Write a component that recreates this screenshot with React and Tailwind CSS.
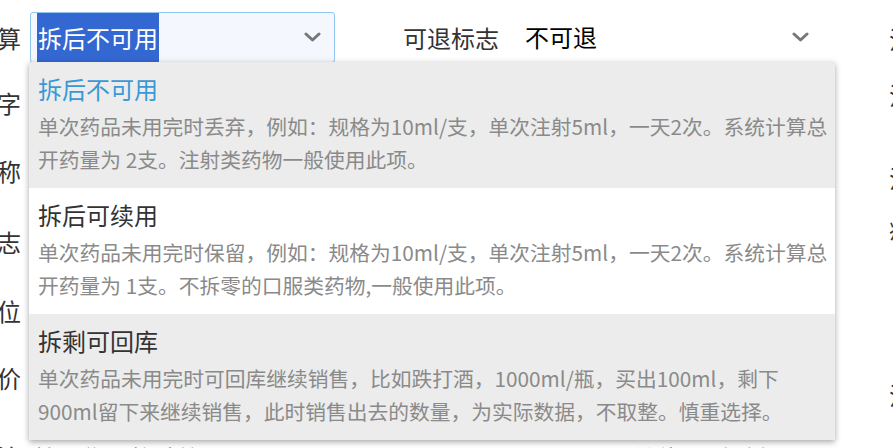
import React from 'react'

const leftLabels = [
  { text: '是否拆零计算', top: 'mt-[14px]' },
  { text: '助记名字', top: 'mt-[17px]' },
  { text: '药品名称', top: 'mt-[20px]' },
  { text: '是否禁用标志', top: 'mt-[23px]' },
  { text: '最小单位', top: 'mt-[21px]' },
  { text: '零售单价', top: 'mt-[19px]' }
]

const rightLabels = [
  { text: '注射方式', top: 'mt-[15px]' },
  { text: '注意事项', top: 'mt-[8px]' },
  { text: '注册商标', top: 'mt-[35px]' },
  { text: '病种分类', top: 'mt-[2px]' },
  { text: '注释说明', top: 'mt-[119px]' }
]

const options = [
  {
    title: '拆后不可用',
    lines: [
      '单次药品未用完时丢弃，例如：规格为10ml/支，单次注射5ml，一天2次。系统计算总',
      '开药量为 2支。注射类药物一般使用此项。'
    ],
    active: true
  },
  {
    title: '拆后可续用',
    lines: [
      '单次药品未用完时保留，例如：规格为10ml/支，单次注射5ml，一天2次。系统计算总',
      '开药量为 1支。不拆零的口服类药物,一般使用此项。'
    ]
  },
  {
    title: '拆剩可回库',
    lines: [
      '单次药品未用完时可回库继续销售，比如跌打酒，1000ml/瓶，买出100ml，剩下',
      '900ml留下来继续销售，此时销售出去的数量，为实际数据，不取整。慎重选择。'
    ],
    shaded: true
  }
]

function Chevron() {
  return (
    <svg width="17" height="11" viewBox="0 0 17 11" className="shrink-0">
      <polyline points="2,2 8.5,8 15,2" fill="none" stroke="#777" strokeWidth="3" strokeLinecap="round" strokeLinejoin="round" />
    </svg>
  )
}

export default function App() {
  return (
    <div className="relative w-[893px] h-[448px] overflow-hidden bg-white text-[#333] font-['Noto_Sans_CJK_SC','Noto_Sans',sans-serif] flex">
      {/* left label column, only last char visible */}
      <div className="w-[21px] shrink-0 flex flex-col overflow-hidden">
        {leftLabels.map(({ text, top }) => (
          <div key={text} className={`${top} h-[48px] w-full flex items-center justify-end`}>
            <span className="shrink-0 whitespace-nowrap text-[24px] leading-[48px]">{text}</span>
          </div>
        ))}
        <div className="mt-[40px] h-[30px] w-full flex items-center justify-end">
          <span className="shrink-0 whitespace-nowrap text-[24px] leading-[30px]">备注</span>
        </div>
      </div>

      {/* middle */}
      <div className="ml-[9px] w-[859px] shrink-0 flex flex-col">
        <div className="mt-[12px] h-[51px] flex items-center">
          <div className="w-[305px] h-[51px] shrink-0 border border-[#90c6f0] rounded-[3px] bg-[#f4f8fe] flex items-stretch pl-[6px] pr-[13px]">
            <span className="bg-[#3367d1] text-white text-[24px] leading-none flex items-center px-[1px]">拆后不可用</span>
            <div className="flex-1" />
            <div className="flex items-center">
              <Chevron />
            </div>
          </div>
          <span className="ml-[68px] w-[117px] shrink-0 text-[24px] leading-none whitespace-nowrap">可退标志</span>
          <div className="w-[302px] h-[51px] shrink-0 border-b border-[#d0d0d0] flex items-center pl-[5px] pr-[13px] text-[24px] text-black">
            <span className="flex-1">不可退</span>
            <Chevron />
          </div>
        </div>
        <div className="mt-[380px] h-[30px] flex items-center text-[24px] leading-[30px] whitespace-nowrap">
          <span className="ml-[4px] text-[#444]">按零售价格计算</span>
          <span className="ml-[430px] text-[#444]">单位</span>
          <span className="ml-[30px] text-[#999]">请选择</span>
        </div>
      </div>

      {/* right label column, clipped by page edge */}
      <div className="w-[40px] shrink-0 flex flex-col">
        {rightLabels.map(({ text, top }) => (
          <div key={text} className={`${top} h-[48px] flex items-center whitespace-nowrap text-[24px] leading-[48px]`}>
            {text}
          </div>
        ))}
      </div>

      {/* dropdown overlay */}
      <div className="absolute left-[29px] top-[62px] w-[806px] z-10 bg-white shadow-[0_2px_6px_rgba(0,0,0,0.35)]">
        {options.map((o) => (
          <div
            key={o.title}
            className={`h-[126px] pl-[9px] pt-[8px] ${o.active || o.shaded ? 'bg-[#ececec]' : 'bg-white'}`}
          >
            <div className={`text-[24px] leading-[38px] ${o.active ? 'text-[#3a98d6]' : 'text-[#333]'}`}>{o.title}</div>
            <div className="mt-[2px] text-[20.75px] leading-[33px] text-[#8a8a8a]">
              {o.lines.map((l) => (
                <div key={l} className="whitespace-nowrap">{l}</div>
              ))}
            </div>
          </div>
        ))}
      </div>
    </div>
  )
}
